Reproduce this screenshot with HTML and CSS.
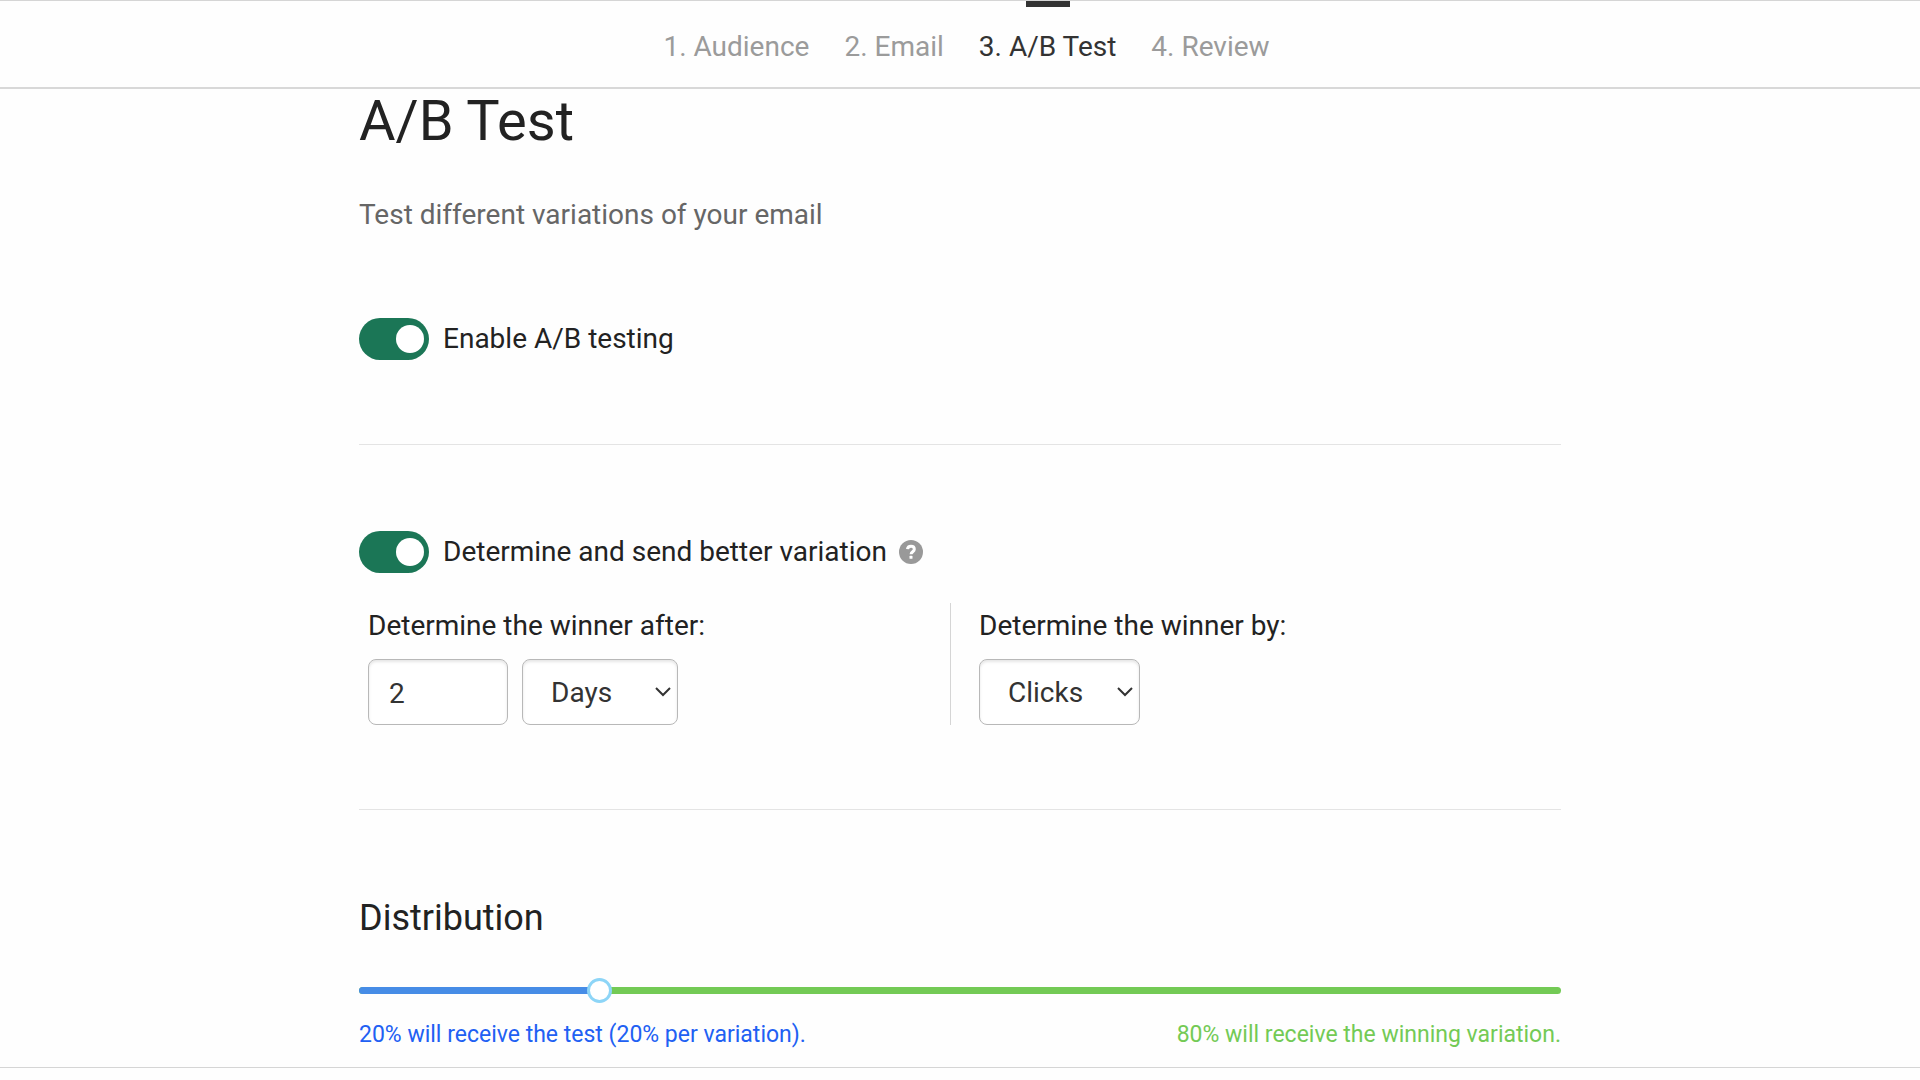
FILE: index.html
```html
<!DOCTYPE html>
<html lang="en">
<head>
<meta charset="utf-8">
<meta name="viewport" content="width=device-width, initial-scale=1">
<title>A/B Test</title>
<link rel="stylesheet" href="styles.css">
</head>
<body>
<header class="topbar">
  <nav class="steps">
    <a class="step" href="#audience">1. Audience</a>
    <a class="step" href="#email">2. Email</a>
    <a class="step step-active" href="#ab-test" aria-current="step">3. A/B Test</a>
    <a class="step" href="#review">4. Review</a>
  </nav>
</header>
<main class="content">
  <section class="section section-first">
    <h1 class="title">A/B Test</h1>
    <p class="subtitle">Test different variations of your email</p>
    <div class="toggle-row">
      <input class="toggle" type="checkbox" id="enable" checked>
      <label for="enable">Enable A/B testing</label>
    </div>
  </section>
  <section class="section">
    <div class="toggle-row">
      <input class="toggle" type="checkbox" id="winner" checked>
      <label for="winner">Determine and send better variation</label>
      <button class="help" type="button" aria-label="Help">
        <svg width="24" height="24" viewBox="0 0 24 24" fill="none">
          <circle cx="12" cy="12" r="12" fill="#999"/>
          <path d="M8.500 9.200C8.700 7.200 10 6.300 12 6.300c2 0 3.300 1.100 3.300 2.900 0 2.500-3.200 2.500-3.200 5" stroke="#fff" stroke-width="3"/>
          <rect x="10.500" y="15.800" width="3" height="3" rx=".6" fill="#fff"/>
        </svg>
      </button>
    </div>
    <div class="criteria">
      <div class="criterion">
        <label class="criterion-label" for="amount">Determine the winner after:</label>
        <div class="fields">
          <input class="field amount" type="text" inputmode="numeric" id="amount" value="2">
          <div class="select">
            <select class="field unit" aria-label="Time unit"><option>Days</option><option>Hours</option></select>
            <svg class="arrow" width="16" height="10" viewBox="0 0 16 10" fill="none"><path d="M1 1l7 7 7-7" stroke="#333" stroke-width="2"/></svg>
          </div>
        </div>
      </div>
      <div class="criterion">
        <label class="criterion-label" for="metric">Determine the winner by:</label>
        <div class="fields">
          <div class="select">
            <select class="field metric" id="metric"><option>Clicks</option><option>Opens</option></select>
            <svg class="arrow" width="16" height="10" viewBox="0 0 16 10" fill="none"><path d="M1 1l7 7 7-7" stroke="#333" stroke-width="2"/></svg>
          </div>
        </div>
      </div>
    </div>
  </section>
  <section class="section section-last">
    <h2 class="heading" id="distribution">Distribution</h2>
    <div class="slider">
      <div class="track"><div class="track-fill" style="width:20%"></div></div>
      <input class="range" type="range" min="0" max="100" value="20" aria-labelledby="distribution">
    </div>
    <div class="legend">
      <span class="legend-test">20% will receive the test (20% per variation).</span>
      <span class="legend-winner">80% will receive the winning variation.</span>
    </div>
  </section>
</main>
<footer class="bottombar"></footer>
</body>
</html>
```
FILE: styles.css
```css
* {
  box-sizing: border-box;
}

body {
  margin: 0;
  background: #fefefe;
  color: #222;
  font-family: Roboto, "Liberation Sans", sans-serif;
  font-size: 28px;
  line-height: 36px;
}

input,
select,
button {
  margin: 0;
  font: inherit;
}

.topbar {
  border-top: 1px solid #d5d5d5;
  border-bottom: 2px solid #d8d8d8;
}

.steps {
  display: flex;
  justify-content: center;
  gap: 35px;
  padding-left: 13px;
}

.step {
  position: relative;
  padding: 28px 0 22px;
  color: #9b9b9b;
  text-decoration: none;
}

.step-active {
  color: #333;
}

.step-active::before {
  content: "";
  position: absolute;
  top: 0;
  left: 50%;
  width: 44px;
  height: 6px;
  margin-left: -22px;
  background: #333;
}

.content {
  max-width: 1202px;
  margin: 0 auto;
}

.section {
  padding: 86px 0 84px;
  border-bottom: 1px solid #e4e4e4;
}

.section-first {
  padding-top: 0;
}

.section-last {
  padding-bottom: 18px;
  border-bottom: 0;
}

.title {
  margin: 0 0 44px;
  font-size: 56px;
  font-weight: 400;
  line-height: 64px;
}

.subtitle {
  margin: 0 0 85px;
  color: #666;
}

.toggle-row {
  display: flex;
  align-items: center;
  height: 42px;
}

.toggle {
  appearance: none;
  display: flex;
  align-items: center;
  width: 70px;
  height: 42px;
  margin-right: 14px;
  padding: 0 5px;
  border-radius: 21px;
  background: #999;
}

.toggle::before {
  content: "";
  width: 28px;
  height: 28px;
  border-radius: 50%;
  background: #fff;
}

.toggle:checked {
  justify-content: flex-end;
  background: #1b7656;
}

.help {
  display: flex;
  margin-left: 12px;
  padding: 0;
  border: 0;
  background: none;
}

.criteria {
  display: grid;
  grid-template-columns: 591px 1fr;
  margin-top: 30px;
}

.criterion {
  padding: 5px 0 0 9px;
}

.criterion + .criterion {
  padding-left: 28px;
  border-left: 1px solid #d5d5d5;
}

.criterion-label {
  display: block;
  margin-bottom: 15px;
}

.fields {
  display: flex;
  gap: 14px;
}

.field {
  height: 66px;
  border: 1px solid #b8b8b8;
  border-radius: 8px;
  background: #fff;
  box-shadow: inset 0 2px 3px rgba(0, 0, 0, 0.1);
  color: #333;
}

.amount {
  width: 140px;
  padding: 2px 20px 0;
}

.select {
  display: grid;
  align-items: center;
}

.select .field,
.arrow {
  grid-area: 1 / 1;
}

.select .field {
  appearance: none;
  padding: 2px 36px 0 28px;
}

.unit {
  width: 156px;
}

.metric {
  width: 161px;
}

.arrow {
  justify-self: end;
  margin-right: 7px;
  pointer-events: none;
}

.heading {
  margin: 0 0 38px;
  font-size: 36px;
  font-weight: 400;
  line-height: 44px;
}

.slider {
  display: grid;
  align-items: center;
  height: 25px;
}

.track,
.range {
  grid-area: 1 / 1;
}

.track {
  height: 7px;
  border-radius: 4px;
  background: #73ca55;
  overflow: hidden;
}

.track-fill {
  height: 7px;
  background: #468ce6;
}

.range {
  appearance: none;
  width: calc(100% + 25px);
  height: 25px;
  margin-left: -12px;
  background: transparent;
}

.range::-webkit-slider-thumb {
  appearance: none;
  width: 25px;
  height: 25px;
  border: 3px solid #8dd5f7;
  border-radius: 50%;
  background: #fff;
}

.legend {
  display: flex;
  justify-content: space-between;
  margin-top: 18px;
  font-size: 23px;
  line-height: 28px;
}

.legend-test {
  color: #2160f3;
}

.legend-winner {
  color: #73ca55;
}

.bottombar {
  height: 12px;
  border-top: 1px solid #d5d5d5;
}
```
